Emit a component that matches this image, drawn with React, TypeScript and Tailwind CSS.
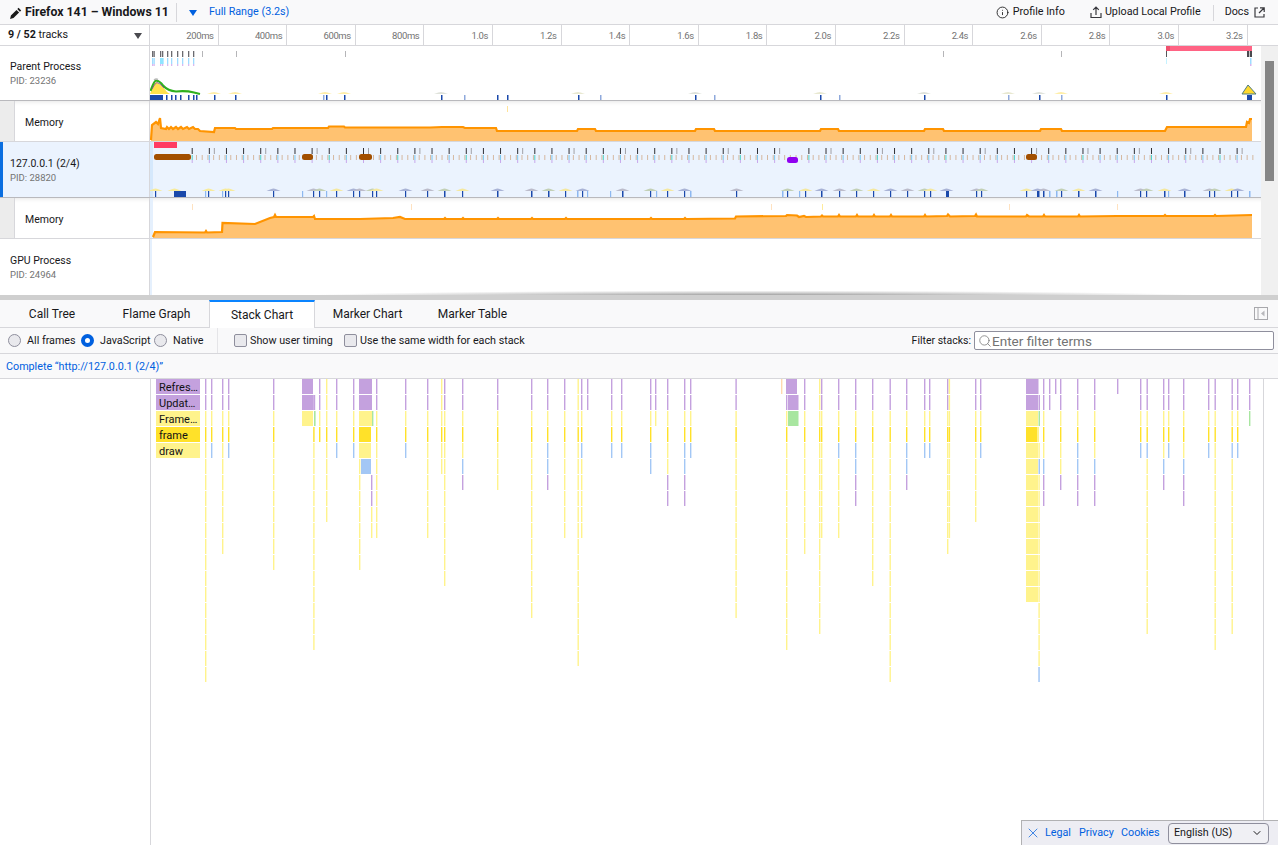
import { ChevronDown, Info, Search, X } from "lucide-react";
import type { ReactNode } from "react";

const PURPLE = "#c4a1de";
const YELLOW = "#fff38c";
const GOLD = "#ffe129";
const BLUE = "#a3c7f5";
const GREEN = "#a8e6a0";
const ORANGE = "#ffd9b0";

const COLORS: Record<string, string> = {
  p: PURPLE,
  y: YELLOW,
  f: GOLD,
  b: BLUE,
  g: GREEN,
  o: ORANGE,
};

// x, colours from the top row, last row that the yellow tail reaches
const COLUMNS: [number, string, number?][] = [
  [205, "ppyf", 18], [211, "ppyfb"], [222, "ppyf", 10], [228, "ppyfb"], [273, "ppyf", 11],
  [319, "ppyf"], [326, "yyyf", 8], [336, "ppyfb"], [353, "ppyfb"], [376, "ppyf", 9],
  [405, "ppyfb"], [427, "ppyf", 9], [441, "yyyf", 5], [444, "ppyf", 12], [462, "ppyfybp"],
  [497, "ppyf", 6], [531, "ppyf", 14], [547, "ppyfbbp"], [564, "ppyf", 9], [577.5, "yyyf", 17],
  [581, "ppyfb", 9], [587, "pp"], [611, "ppyfb"], [621, "ppyfb"], [650, "ppyfbb"], [655, "ppy"],
  [667, "ppyfyypp"], [684, "ppyfbbpp"], [690, "ppyfb"], [735.4, "ppyf", 14], [781, "o"],
  [804, "ppyf", 10], [819, "yyyf", 15], [821, "ppyf", 9], [838, "ppyfb", 9], [855, "ppyfbbpp"],
  [872, "ppyf", 12], [889.5, "ppyf", 18], [906, "ppyfbbp"], [924, "ppyfb"], [929, "ppyfb"],
  [947, "ppyf", 10], [948.7, "yyyf", 9], [975, "ppyf", 8], [980, "ppyfb"], [1043, "ppyfybpp"],
  [1049, "pp"], [1055, "p"], [1060, "ppyfyyp"], [1077, "ppyfbbpp"], [1094, "ppyfybpp"],
  [1117, "p"], [1140, "ppyfb"], [1146.5, "ppyfb", 15], [1163, "ppyfybp"], [1168, "ppyfb"],
  [1183, "ppyfybpp"], [1208, "ppyfb"], [1214.5, "ppyf", 16], [1231.5, "ppyfb", 15],
  [1237, "ppyfb"], [1249, "ppg"],
];

// x, width, row, colour
const BLOCKS: [number, number, number, string][] = [
  [156, 44, 0, PURPLE], [156, 44, 1, PURPLE], [156, 44, 2, YELLOW], [156, 44, 3, GOLD], [156, 44, 4, YELLOW],
  [302, 11, 0, PURPLE], [302, 11, 1, PURPLE], [302, 11, 2, YELLOW],
  [313.2, 2, 1, PURPLE], [314, 1.6, 2, GREEN], [313.2, 1.4, 3, GOLD],
  [359, 13, 0, PURPLE], [359, 13, 1, PURPLE], [359, 13, 2, YELLOW], [359, 12, 3, GOLD], [359, 12, 4, YELLOW],
  [361, 10, 5, BLUE], [372, 1.4, 2, GREEN],
  [371, 1.4, 6, PURPLE], [371, 1.4, 7, PURPLE], [371, 1.4, 8, YELLOW], [371, 1.4, 9, YELLOW],
  [786, 11, 0, PURPLE], [786, 1.4, 1, PURPLE], [788, 10.5, 1, PURPLE], [786, 1.4, 2, YELLOW],
  [788, 10.5, 2, GREEN], [786, 1.4, 3, GOLD],
  [1026, 12.5, 0, PURPLE], [1026, 12, 1, PURPLE], [1038.5, 1.5, 1, PURPLE], [1026, 12, 2, YELLOW],
  [1038.5, 1.5, 2, GREEN], [1026, 11, 3, GOLD], [1037, 2, 3, YELLOW], [1038.5, 1.5, 5, BLUE],
  [1038.3, 1.5, 18, BLUE],
];
for (let r = 4; r <= 16; r++) BLOCKS.push([313.2, 1.4, r, YELLOW]);
for (let r = 5; r <= 11; r++) BLOCKS.push([359, 1.4, r, YELLOW]);
for (let r = 4; r <= 16; r++) BLOCKS.push([786, 1.4, r, YELLOW]);
for (let r = 4; r <= 13; r++) BLOCKS.push([1026, 12, r, YELLOW]);
for (let r = 4; r <= 17; r++) if (r !== 5) BLOCKS.push([1038.4, 1.4, r, YELLOW]);

const STACK_LABELS = ["Refres…", "Updat…", "Frame…", "frame", "draw"];

const RULER = [
  "200ms", "400ms", "600ms", "800ms", "1.0s", "1.2s", "1.4s", "1.6s",
  "1.8s", "2.0s", "2.2s", "2.4s", "2.6s", "2.8s", "3.0s", "3.2s",
];

const TABS: [string, string][] = [
  ["Call Tree", "w-[104px]"],
  ["Flame Graph", "w-[105px]"],
  ["Stack Chart", "w-[106px]"],
  ["Marker Chart", "w-[105px]"],
  ["Marker Table", "w-[105px]"],
];

const MEMORY_A =
  "M151 140L152 125L156 122L158 124L160 118L161 128L166 129L167 127L169 129L171 127L173 129L176 127L178 129L181 127L183 129L187 127L189 129L193 127L195 129L198 129L200 131L214 132L215 128L235 128L236 129L272 129L273 128L328 128L329 126.5L344 126.5L345 127.5L430 127.5L442 127L463 127L465 128L496 128L497 131L577 131L578 129L595 129L596 131L695 131L696 129L714 129L715 131L820 131L821 129L838 129L839 131L924 131L925 129L943 129L944 131L1040 131L1041 129L1061 129L1062 131L1165 131L1167 127L1246 127L1247 122L1249 123L1250 119L1252 119";

const MEMORY_B =
  "M153 237L155 232L205 232.5L206 231L207 232.5L222 232L222.5 223L255 224L270 218L274 217L275 215L276 217L313 217L314 216L315 219L360 219L393 218L400 217L405 219L444 219L445 218L446 219L462 219L463 218L464 219L497 219L498 218L499 219L531 219L532 218L533 219L565 219L566 218L567 219L650 219L651 218L652 219L684 219L685 218L686 219L735 218.5L736 216.5L786 216L787 215L797 215.5L799 217L804 216L806 217L821 216.5L822 215.5L823 216.5L838 216.5L839 215L840 216.5L856 216.5L857 215L858 216.5L873 216.5L874 215L875 216.5L890 216.5L891 215L892 216.5L924 216.5L925 215L926 216.5L947 216L948 214.5L950 216.5L975 216L976 214.5L977 216.5L1026 216.5L1027 215L1029 216.5L1043 216.5L1044 215L1045 216.5L1078 216.5L1079 215L1080 216.5L1117 216L1164 216L1165 215L1166 216L1214 216L1215 215L1216 216L1252 215";

const PARENT_TICKS: [number, number, boolean?][] = [
  [150, 13], [166, 1.5], [171, 1.5], [175, 1.5], [180, 1.5], [188, 1.5], [193, 1.5], [196, 1.5],
  [214, 1.5], [235, 1.5], [323, 1.5, true], [326, 1.5], [344, 1.5], [441, 1.5], [464, 1.5, true],
  [497, 1.5], [507, 1.5], [578, 1.5], [600, 1.5, true], [695, 1.5], [714, 1.5, true], [820, 1.5],
  [839, 1.5, true], [924, 1.5], [1008, 1.5, true], [1039, 1.5], [1061, 1.5, true], [1166, 1.5],
  [1247, 5],
];

const THREAD_TICKS: [number, number, boolean?][] = [
  [155, 1.2], [174, 12], [205, 1.2, true], [208, 1.2], [222, 1.2, true], [225, 1.2], [228, 1.2],
  [273, 1.2], [302, 1.2, true], [313, 1.2], [319, 1.2], [326, 1.2, true], [336, 1.2], [353, 1.2],
  [359, 1.2], [372, 1.2], [376, 1.2], [405, 1.2], [427, 1.2], [444, 1.5], [462, 1.2], [497, 1.5],
  [531, 1.5], [548, 1.5], [565, 1.2], [577, 1.5, true], [582, 1.2], [587, 1.2, true], [610, 1.2, true],
  [622, 1.5], [650, 1.2], [656, 1.2, true], [667, 1.2], [684, 1.2], [690, 1.5, true], [736, 1.2],
  [782, 1.5, true], [787, 1.2], [799, 1.2, true], [805, 1.2], [821, 1.5], [839, 1.2], [856, 1.2],
  [873, 1.2], [890, 1.2], [907, 1.2], [924, 1.2], [930, 1.2], [946, 3], [976, 1.2], [981, 1.2],
  [1026, 1.2], [1037, 2.5], [1043, 1.5], [1049, 1.5, true], [1056, 1.5, true], [1061, 1.2],
  [1078, 1.5], [1095, 1.5], [1117, 1.2, true], [1140, 1.2], [1146, 1.2], [1164, 1.5],
  [1168, 1.2, true], [1184, 1.5], [1209, 1.2], [1214, 1.2], [1231, 1.2], [1237, 1.2], [1249, 1.5, true],
];

const HILL_COLORS = ["#f5e8a0", "#a9b3d6", "#bcbccb", "#c3d0b6"];

function PencilIcon() {
  return (
    <svg width="12" height="12" viewBox="0 0 12 12" className="shrink-0">
      <path d="M8.6.8l2.6 2.6-1.3 1.3-2.6-2.6zM6.5 2.9l2.6 2.6-5.6 5.6-3.4.8.8-3.4z" fill="#1a1a1a" />
    </svg>
  );
}

function UploadIcon() {
  return (
    <svg width="12" height="13" viewBox="0 0 12 13" fill="none" stroke="#38383d" strokeWidth="1.2" className="shrink-0">
      <path d="M6 9V1.2M3.2 3.8L6 1l2.8 2.8M1 7v4.5h10V7" />
    </svg>
  );
}

function ExternalIcon() {
  return (
    <svg width="11" height="11" viewBox="0 0 11 11" fill="none" stroke="#38383d" strokeWidth="1.2" className="shrink-0">
      <path d="M4 1H1v9h9V7M6 .8h4.2V5M10 1L5 6" />
    </svg>
  );
}

function Radio({ on }: { on?: boolean }) {
  return on ? (
    <span className="box-border block size-[13px] rounded-full border-[4px] border-[#0060df] bg-white" />
  ) : (
    <span className="box-border block size-[13px] rounded-full border border-[#8f8f9d] bg-[#e9e9ed]" />
  );
}

function Check() {
  return <span className="box-border block size-[13px] rounded-[2px] border border-[#8f8f9d] bg-[#e9e9ed]" />;
}

function TrackLabel({ name, pid, selected }: { name: string; pid: string; selected?: boolean }) {
  return (
    <div
      className={
        selected
          ? "flex h-full w-[150px] shrink-0 flex-col justify-center border-r border-[#d7d7db] border-l-[3px] border-l-[#0a6ee0] pl-[7px] pt-[2px]"
          : "flex h-full w-[150px] shrink-0 flex-col justify-center border-r border-[#d7d7db] pl-[10px]"
      }
    >
      <div className="text-[10.5px] leading-[14px] text-[#18181a]">{name}</div>
      <div className="text-[9.5px] leading-[13px] text-[#737373]">{pid}</div>
    </div>
  );
}

function MemoryLabel() {
  return (
    <div className="flex h-full w-[150px] shrink-0 border-r border-[#d7d7db]">
      <div className="w-[15px] shrink-0 border-r border-[#d7d7db] bg-[#ececec]" />
      <div className="flex flex-1 items-center pl-[10px] pt-[3px] text-[10.5px] text-[#18181a]">Memory</div>
    </div>
  );
}

function Graph({ top, height, children }: { top: number; height: number; children?: ReactNode }) {
  return (
    <svg width="1111" height={height} viewBox={`150 ${top} 1111 ${height}`} className="block shrink-0">
      {children}
    </svg>
  );
}

function Hill({ x, y, color, h = 2.5 }: { x: number; y: number; color: string; h?: number }) {
  return <path d={`M${x - 7} ${y}Q${x - 2} ${y - h} ${x} ${y - h}Q${x + 2} ${y - h} ${x + 7} ${y}Z`} fill={color} />;
}

function ParentGraph() {
  const dark = [152, 153.5, 160, 162, 167, 171, 177, 182, 188, 193];
  return (
    <Graph top={46} height={54}>
      <rect x="1166" y="46" width="86" height="5" fill="#ff6384" />
      <rect x="1166" y="46" width="4" height="5" fill="#f0506e" />
      {dark.map((x) => (
        <g key={x}>
          <rect x={x} y="51" width="1.3" height="6" fill="#6b6b70" />
          <rect x={x} y="58" width="1.3" height="6" fill="#9fdcff" />
          <rect x={x} y="64" width="1.3" height="2" fill="#d8b8f0" />
        </g>
      ))}
      <rect x="160" y="58" width="3.5" height="6" fill="#8fe4ff" />
      {[202, 236, 345, 943, 1061].map((x) => (
        <rect key={x} x={x} y="51" width="1" height="6" fill="#b5b5b8" />
      ))}
      <rect x="1166" y="51" width="1" height="6" fill="#55555a" />
      <rect x="1166" y="58" width="1" height="6" fill="#c5f2ff" />
      <rect x="1247" y="51" width="5" height="6" fill="#4a4a4f" />
      <rect x="1249" y="51" width="1" height="6" fill="#c8c8c8" />
      <rect x="1250" y="58" width="1.5" height="6" fill="#9fdcff" />
      <rect x="1250" y="64" width="1.5" height="2" fill="#d8b8f0" />
      <path d="M150 94Q154 83 156 82Q161 84 167 92L170 94Z" fill="#ffe14d" />
      <path d="M150.5 91Q154 81 156 80.5Q160 81 163 85.5Q168 91 176 91.5Q186 90.5 194 92.5L200 94" fill="none" stroke="#2fb01e" strokeWidth="2.2" />
      <path d="M152 89Q155 83 157 82.5Q160 83 164 88" fill="none" stroke="#7a3fa0" strokeWidth="0.8" />
      <path d="M154 80Q156 78.5 158 79.5" fill="none" stroke="#b8b8b8" strokeWidth="1.5" />
      {[214, 235, 325, 344, 441, 578, 695, 820, 924, 1008, 1039, 1061, 1166].map((x, i) => (
        <Hill key={x} x={x} y={94} h={2} color={i < 4 || i > 10 ? "#ffeea8" : i % 2 ? "#e8e8d0" : "#dfe2da"} />
      ))}
      <path d="M1242 94L1248 85L1256 94Z" fill="#ffd92e" stroke="#4d7a80" strokeWidth="1" />
      {PARENT_TICKS.map(([x, w, light]) => (
        <rect key={x} x={x} y="95" width={w} height="5" fill={light ? "#8fa9dc" : "#1a49ab"} />
      ))}
    </Graph>
  );
}

function MemoryGraph({ d, fillTo }: { d: string; fillTo: number }) {
  const start = d.slice(1).split("L")[0].split(" ")[0];
  const end = d.split("L").pop()!.split(" ")[0];
  return (
    <>
      <path d={`${d}L${end} ${fillTo}L${start} ${fillTo}Z`} fill="#ffc271" />
      <path d={d} fill="none" stroke="#ff9400" strokeWidth="2.2" />
    </>
  );
}

function ThreadGraph() {
  const dark = Array.from({ length: 62 }, (_, i) => 191.7 + i * 17.13);
  const tan = Array.from({ length: 186 }, (_, i) => 196 + i * 5.71);
  const pills = [
    [154, 37], [302, 11], [359, 13], [1026, 11],
  ];
  return (
    <Graph top={142} height={55}>
      <rect x="150" y="142" width="3" height="55" fill="#d5e8fc" />
      <rect x="154" y="142" width="23" height="6" fill="#ff3b63" />
      {tan.map((x) => (
        <rect key={x} x={x} y="155" width="1" height="5" fill="#d5b8a0" />
      ))}
      {dark.map((x, i) =>
        x > 786 && x < 798 ? null : (
          <g key={x}>
            <rect x={x} y="148" width="1" height="6" fill="#303036" />
            {i % 3 === 1 && <rect x={x + 5} y="148" width="1" height="6" fill="#a0a0a6" />}
            <rect x={x} y="155" width="1" height="5" fill={i % 4 === 0 ? "#4fd2c8" : "#7cc8f0"} />
            <rect x={x} y="160" width="1" height="3" fill="#c8a8ec" />
          </g>
        ),
      )}
      {pills.map(([x, w]) => (
        <rect key={x} x={x} y="154" width={w} height="6" rx="2.5" fill="#a24f00" />
      ))}
      <rect x="787" y="157" width="11" height="6" rx="2.5" fill="#9000f0" />
      {THREAD_TICKS.filter(([, , light]) => !light).map(([x], i) => (
        <Hill key={x} x={x + 0.5} y={191} color={i < 5 ? "#f8eb9c" : HILL_COLORS[i % 4]} />
      ))}
      {THREAD_TICKS.map(([x, w, light]) => (
        <rect key={x} x={x} y="191" width={w} height="6" fill={light ? "#8db8f0" : "#1a49ab"} />
      ))}
    </Graph>
  );
}

function StackChart() {
  const bars: ReactNode[] = [];
  COLUMNS.forEach(([x, stack, last]) => {
    const total = last === undefined ? stack.length : last + 1;
    for (let r = 0; r < total; r++) {
      const c = stack[r] ?? "y";
      bars.push(<rect key={`${x}-${r}`} x={x} y={379 + r * 16} width="1.4" height="15" fill={COLORS[c]} />);
    }
  });
  return (
    <svg width="1112" height="466" viewBox="151 379 1112 466" className="block shrink-0">
      {bars}
      {BLOCKS.map(([x, w, r, fill], i) => (
        <rect key={i} x={x} y={379 + r * 16} width={w} height="15" fill={fill} />
      ))}
      {STACK_LABELS.map((label, i) => (
        <text key={label} x="159" y={390.5 + i * 16} fontSize="11" fill="#111114">
          {label}
        </text>
      ))}
    </svg>
  );
}

export default function App() {
  return (
    <div className="relative h-[845px] w-[1278px] overflow-hidden bg-white font-['Roboto',sans-serif] text-[10.75px] text-[#18181a]">
      <div className="flex h-[25px] items-center border-b border-[#d7d7db] bg-[#f9f9fa] pt-[1px]">
        <div className="flex w-[177px] shrink-0 items-center gap-[3px] border-r border-[#d7d7db] pl-[10px]">
          <PencilIcon />
          <span className="text-[12.3px] font-bold text-[#18181a]">Firefox 141 – Windows 11</span>
        </div>
        <div className="ml-[12px] h-0 w-0 border-x-[4px] border-t-[6px] border-x-transparent border-t-[#0060df]" />
        <span className="ml-[12px] text-[#0060df]">Full Range (3.2s)</span>
        <div className="ml-auto flex items-center gap-[4px]">
          <Info size={13} strokeWidth={1.6} />
          <span>Profile Info</span>
        </div>
        <div className="ml-[25px] flex items-center gap-[3px]">
          <UploadIcon />
          <span>Upload Local Profile</span>
        </div>
        <div className="ml-[12px] h-[16px] w-px bg-[#d7d7db]" />
        <div className="ml-[11px] mr-[13px] flex items-center gap-[5px]">
          <span>Docs</span>
          <ExternalIcon />
        </div>
      </div>

      <div className="flex h-[21px] border-b border-[#d7d7db] bg-white">
        <div className="flex w-[150px] shrink-0 items-center justify-between border-r border-[#d7d7db] pl-[8px] pr-[7px] pt-[1px]">
          <span>
            <b className="font-bold">9 / 52</b> tracks
          </span>
          <div className="h-0 w-0 border-x-[4px] border-t-[6px] border-x-transparent border-t-[#4a4a4f]" />
        </div>
        <div className="flex">
          {RULER.map((label) => (
            <div
              key={label}
              className="w-[68.6px] shrink-0 border-r border-[#d7d7db] pr-[4px] text-right text-[9.5px] leading-[21px] tracking-[-0.4px] text-[#737373]"
            >
              {label}
            </div>
          ))}
        </div>
      </div>

      <div className="relative flex h-[249px]">
        <div className="w-[1261px] shrink-0">
          <div className="flex h-[55px] border-b border-[#b9b9bd]">
            <TrackLabel name="Parent Process" pid="PID: 23236" />
            <ParentGraph />
          </div>
          <div className="flex h-[41px] border-b border-[#d7d7db] shadow-[inset_0_4px_4px_-3px_rgba(0,0,0,0.1)]">
            <MemoryLabel />
            <Graph top={101} height={40}>
              <MemoryGraph d={MEMORY_A} fillTo={141} />
              <rect x="507" y="106" width="1" height="6" fill="#ffe39a" />
            </Graph>
          </div>
          <div className="flex h-[56px] border-b border-[#b9b9bd] bg-[#ebf3fe]">
            <TrackLabel name="127.0.0.1 (2/4)" pid="PID: 28820" selected />
            <ThreadGraph />
          </div>
          <div className="flex h-[41px] border-b border-[#d7d7db] shadow-[inset_0_4px_4px_-3px_rgba(0,0,0,0.1)]">
            <MemoryLabel />
            <Graph top={198} height={40}>
              <rect x="150" y="198" width="3" height="40" fill="#e5f0fd" />
              <rect x="192" y="204" width="1" height="6" fill="#ffe2c0" />
              <rect x="411" y="204" width="1" height="6" fill="#ffe2c0" />
              <rect x="771" y="204" width="1" height="6" fill="#ffe2c0" />
              <rect x="822" y="204" width="1" height="6" fill="#ffeb9a" />
              <rect x="1009" y="204" width="1" height="6" fill="#ffe2c0" />
              <rect x="1117" y="204" width="1" height="6" fill="#ffe2c0" />
              <MemoryGraph d={MEMORY_B} fillTo={238} />
            </Graph>
          </div>
          <div className="flex h-[56px]">
            <TrackLabel name="GPU Process" pid="PID: 24964" />
            <Graph top={239} height={56}>
              <rect x="150" y="239" width="2" height="56" fill="#e5f0fd" />
            </Graph>
          </div>
        </div>
        <div className="flex-1 bg-[#f0f0f0] pl-[4px] pt-[15px]">
          <div className="h-[120px] w-[9px] bg-[#858585]" />
        </div>
        <div className="absolute bottom-0 left-[250px] h-[5px] w-[1011px] bg-[radial-gradient(ellipse_at_50%_130%,rgba(90,90,90,0.75),rgba(255,255,255,0)_65%)]" />
      </div>

      <div className="h-[5px] bg-[#cfcfcf]" />

      <div className="flex h-[28px] border-b border-[#d7d7db] bg-[#f9f9fa]">
        {TABS.map(([tab, width]) => (
          <div
            key={tab}
            className={
              tab === "Stack Chart"
                ? `box-border flex h-[28px] ${width} shrink-0 items-center justify-center border-x border-t-2 border-x-[#d7d7db] border-t-[#0a84ff] bg-white text-[12px]`
                : `flex ${width} shrink-0 items-center justify-center pt-[1px] text-[12px]`
            }
          >
            {tab}
          </div>
        ))}
        <div className="ml-auto mr-[10px] flex items-center">
          <svg width="14" height="13" viewBox="0 0 14 13" fill="none">
            <rect x="0.5" y="0.5" width="13" height="12" stroke="#a8a8ac" />
            <path d="M4 .5v12" stroke="#a8a8ac" />
            <path d="M10.5 3.5v6L7 6.5z" fill="#b8b8bc" />
          </svg>
        </div>
      </div>

      <div className="flex h-[26px] items-center border-b border-[#d7d7db] bg-[#f9f9fa]">
        <div className="flex h-full w-[218px] shrink-0 items-center border-r border-[#e5e5e8] pl-[8px]">
          <Radio />
          <span className="ml-[6px] w-[54px] pt-[1px]">All frames</span>
          <Radio on />
          <span className="ml-[6px] w-[54px] pt-[1px]">JavaScript</span>
          <Radio />
          <span className="ml-[6px] pt-[1px]">Native</span>
        </div>
        <div className="ml-[16px]">
          <Check />
        </div>
        <span className="ml-[3px] w-[94px] pt-[1px]">Show user timing</span>
        <Check />
        <span className="ml-[3px] pt-[1px]">Use the same width for each stack</span>
        <span className="ml-auto pt-[1px] text-[10.5px]">Filter stacks:</span>
        <div className="ml-[3px] mr-[4px] flex h-[19px] w-[300px] items-center rounded-[2px] border border-[#8f8f9d] bg-white pl-[3px]">
          <Search size={14} strokeWidth={1.3} color="#737373" />
          <span className="pt-[1px] text-[13.5px] leading-[16px] text-[#737373]">Enter filter terms</span>
        </div>
      </div>

      <div className="flex h-[25px] items-center border-b border-[#d7d7db] bg-[#f9f9fa] pl-[6px] pt-[2px] text-[#0060df]">
        Complete “http://127.0.0.1 (2/4)”
      </div>

      <div className="flex h-[466px]">
        <div className="w-[151px] shrink-0 border-r border-[#d7d7db]" />
        <StackChart />
        <div className="flex-1 border-l border-[#d7d7db]" />
      </div>

      <div className="absolute bottom-0 right-0 flex h-[25px] w-[257px] items-center border-l border-t border-[#b1b1b3] bg-[#ededf3] pl-[3px]">
        <X size={16} strokeWidth={1.1} color="#0060df" />
        <a className="ml-[4px] w-[26px] pt-[1px] text-[#0060df]">Legal</a>
        <a className="ml-[8px] w-[34px] pt-[1px] text-[#0060df]">Privacy</a>
        <a className="ml-[8px] w-[39px] pt-[1px] text-[#0060df]">Cookies</a>
        <div className="ml-[8px] flex h-[21px] w-[101px] items-center justify-between rounded-[4px] border border-[#8f8f9d] bg-[#f0f0f4] pl-[5px] pr-[5px]">
          <span className="pt-[1px]">English (US)</span>
          <ChevronDown size={12} strokeWidth={2} />
        </div>
      </div>
    </div>
  );
}
